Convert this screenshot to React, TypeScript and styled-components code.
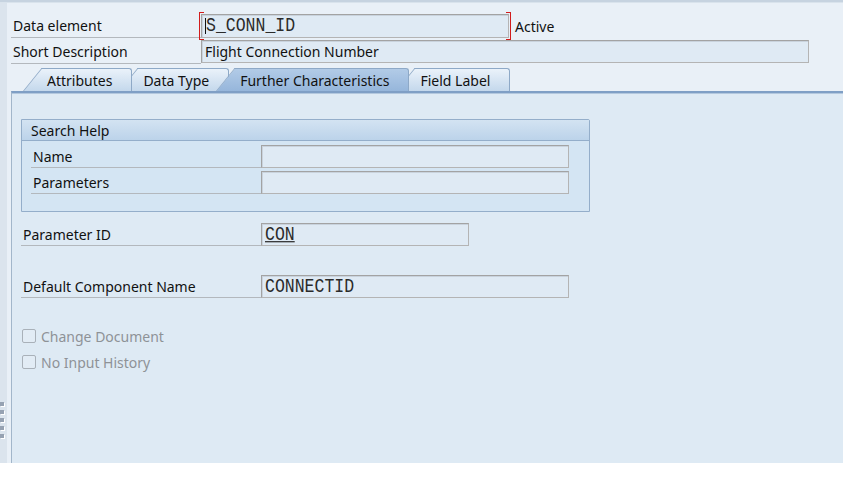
import React from "react";
import styled, { createGlobalStyle } from "styled-components";

const Global = createGlobalStyle`
  html, body { margin: 0; padding: 0; background: #ffffff; }
  body { font-family: "Noto Sans", "Liberation Sans", Arial, sans-serif; font-size: 14px; color: #111; }
`;

const Frame = styled.div`
  width: 843px;
  height: 463px;
  display: flex;
  flex-direction: column;
  overflow: hidden;
`;

const TopBar = styled.div`
  height: 2px;
  background: #c6d3e0;
  border-bottom: 1px solid #d9e3ec;
`;

const Body = styled.div`
  flex: 1;
  display: flex;
  min-height: 0;
`;

const Sidebar = styled.div`
  width: 7px;
  background: #dbe4ed;
  display: flex;
  flex-direction: column;
  justify-content: flex-end;
  gap: 4px;
  padding-bottom: 25px;
`;

const Grip = styled.div`
  width: 4px;
  height: 4px;
  background: #96a2b2;
  box-shadow: 1px 1px 0 #ffffff;
`;

const Main = styled.div`
  flex: 1;
  background: #e9f0f7;
  display: flex;
  flex-direction: column;
  padding-top: 11px;
  padding-left: 4px;
  min-width: 0;
`;

const HeaderRow = styled.div<{ $h: number; $mt?: number }>`
  display: flex;
  align-items: stretch;
  height: ${(p) => p.$h}px;
  margin-top: ${(p) => p.$mt ?? 0}px;
`;

const Label = styled.div<{ $w: number }>`
  width: ${(p) => p.$w}px;
  flex: none;
  box-sizing: border-box;
  padding-left: 2px;
  display: flex;
  align-items: center;
  border-bottom: 1px solid #b3b8bd;
  color: #111;
  white-space: nowrap;
`;

const FieldWrap = styled.div<{ $bracket?: boolean }>`
  position: relative;
  display: flex;
  ${(p) =>
    p.$bracket
      ? `
  &::before, &::after {
    content: "";
    position: absolute;
    top: -2px;
    bottom: -2px;
    width: 4px;
    border: 1px solid #d21c1c;
    pointer-events: none;
  }
  &::before { left: -2px; border-right: none; }
  &::after { right: -2px; border-left: none; }
  `
      : ""}
`;

const Field = styled.div<{ $w: number; $h?: number }>`
  width: ${(p) => p.$w}px;
  height: ${(p) => p.$h ?? 23}px;
  box-sizing: border-box;
  background: #dfeaf4;
  border: 1px solid #a3a3a3;
  border-right-color: #b4b4b4;
  border-bottom-color: #b4b4b4;
  box-shadow: inset 1px 1px 0 #c9d3dd;
  display: flex;
  align-items: center;
  padding-left: 3px;
  overflow: hidden;
  white-space: nowrap;
`;

const Caret = styled.span`
  display: inline-block;
  width: 1px;
  height: 16px;
  background: #111;
`;

const Mono = styled.span<{ $u?: boolean }>`
  display: inline-block;
  font-family: "Liberation Mono", "DejaVu Sans Mono", monospace;
  font-size: 16.5px;
  line-height: 18px;
  transform: scale(1, 1.22);
  transform-origin: left center;
  color: #2a2a2a;
  text-decoration: ${(p) => (p.$u ? "underline" : "none")};
  text-decoration-thickness: 1px;
  text-underline-offset: 1px;
`;

const Status = styled.span`
  margin-left: 6px;
  display: flex;
  align-items: center;
  padding-top: 1px;
`;

const TabArea = styled.div`
  flex: 1;
  display: flex;
  flex-direction: column;
  margin-top: 4px;
  min-height: 0;
`;

const TabBar = styled.div`
  display: flex;
  height: 23px;
  padding-left: 12px;
`;

const Tab = styled.div<{ $active?: boolean; $z: number; $first?: boolean }>`
  position: relative;
  z-index: ${(p) => p.$z};
  height: 23px;
  box-sizing: border-box;
  padding: 1px 20px 0 24px;
  margin-left: ${(p) => (p.$first ? 0 : -13)}px;
  display: flex;
  align-items: center;
  white-space: nowrap;
  color: #111;

  &::before,
  &::after {
    content: "";
    position: absolute;
    top: 0;
    bottom: 0;
    background: ${(p) =>
      p.$active
        ? "linear-gradient(#b2cbe7, #96b6db)"
        : "linear-gradient(#eaf2fa, #c4d8ec)"};
    border-top: 1px solid #8ea9c7;
  }
  &::before {
    left: 0;
    width: 30px;
    border-left: 1px solid #8ea9c7;
    transform: skewX(-39deg);
    transform-origin: left bottom;
  }
  &::after {
    left: 19px;
    right: 0;
    border-right: 1px solid #8ea9c7;
    border-top-right-radius: 3px;
  }
`;

const TabText = styled.span`
  position: relative;
  z-index: 1;
`;

const Panel = styled.div`
  flex: 1;
  background: #deeaf4;
  border-top: 2px solid #7f9fc5;
  border-left: 1px solid #a2b6ca;
  box-shadow: inset 0 1px 0 #b3c8de;
  padding: 26px 0 0 9px;
  display: flex;
  flex-direction: column;
`;

const Group = styled.div`
  width: 569px;
  box-sizing: border-box;
  border: 1px solid #94aeca;
  border-top-right-radius: 2px;
  background: #d4e5f3;
`;

const GroupHead = styled.div`
  height: 20px;
  background: linear-gradient(#d3e3f2, #bcd3ea);
  border-bottom: 1px solid #94aeca;
  display: flex;
  align-items: center;
  padding-left: 9px;
`;

const GroupBody = styled.div`
  display: flex;
  flex-direction: column;
  gap: 3px;
  padding: 4px 0 17px 9px;
`;

const FormRow = styled.div<{ $mt?: number }>`
  display: flex;
  height: 23px;
  margin-top: ${(p) => p.$mt ?? 0}px;
`;

const CheckRow = styled.div<{ $mt?: number }>`
  display: flex;
  align-items: center;
  height: 16px;
  margin-top: ${(p) => p.$mt ?? 0}px;
  padding-left: 1px;
  color: #8e9297;
`;

const Box = styled.span`
  width: 14px;
  height: 14px;
  box-sizing: border-box;
  border: 1px solid #a9b1b9;
  border-radius: 2px;
  background: #e2ecf5;
  margin-right: 5px;
`;

export default function App() {
  return (
    <>
      <Global />
      <Frame>
        <TopBar />
        <Body>
          <Sidebar>
            <Grip />
            <Grip />
            <Grip />
            <Grip />
            <Grip />
          </Sidebar>
          <Main>
            <HeaderRow $h={24}>
              <Label $w={190}>Data element</Label>
              <FieldWrap $bracket>
                <Field $w={308} $h={24}>
                  <Caret />
                  <Mono>S_CONN_ID</Mono>
                </Field>
              </FieldWrap>
              <Status>Active</Status>
            </HeaderRow>
            <HeaderRow $h={24} $mt={2}>
              <Label $w={190}>Short Description</Label>
              <FieldWrap>
                <Field $w={608} $h={23}>
                  Flight Connection Number
                </Field>
              </FieldWrap>
            </HeaderRow>
            <TabArea>
              <TabBar>
                <Tab $z={4} $first>
                  <TabText>Attributes</TabText>
                </Tab>
                <Tab $z={3}>
                  <TabText>Data Type</TabText>
                </Tab>
                <Tab $z={10} $active>
                  <TabText>Further Characteristics</TabText>
                </Tab>
                <Tab $z={1}>
                  <TabText>Field Label</TabText>
                </Tab>
              </TabBar>
              <Panel>
                <Group>
                  <GroupHead>Search Help</GroupHead>
                  <GroupBody>
                    <FormRow>
                      <Label $w={230}>Name</Label>
                      <Field $w={308} />
                    </FormRow>
                    <FormRow>
                      <Label $w={230}>Parameters</Label>
                      <Field $w={308} />
                    </FormRow>
                  </GroupBody>
                </Group>
                <FormRow $mt={11}>
                  <Label $w={240}>Parameter ID</Label>
                  <Field $w={208}>
                    <Mono $u>CON</Mono>
                  </Field>
                </FormRow>
                <FormRow $mt={29}>
                  <Label $w={240}>Default Component Name</Label>
                  <Field $w={308}>
                    <Mono>CONNECTID</Mono>
                  </Field>
                </FormRow>
                <CheckRow $mt={30}>
                  <Box />
                  Change Document
                </CheckRow>
                <CheckRow $mt={10}>
                  <Box />
                  No Input History
                </CheckRow>
              </Panel>
            </TabArea>
          </Main>
        </Body>
      </Frame>
    </>
  );
}
